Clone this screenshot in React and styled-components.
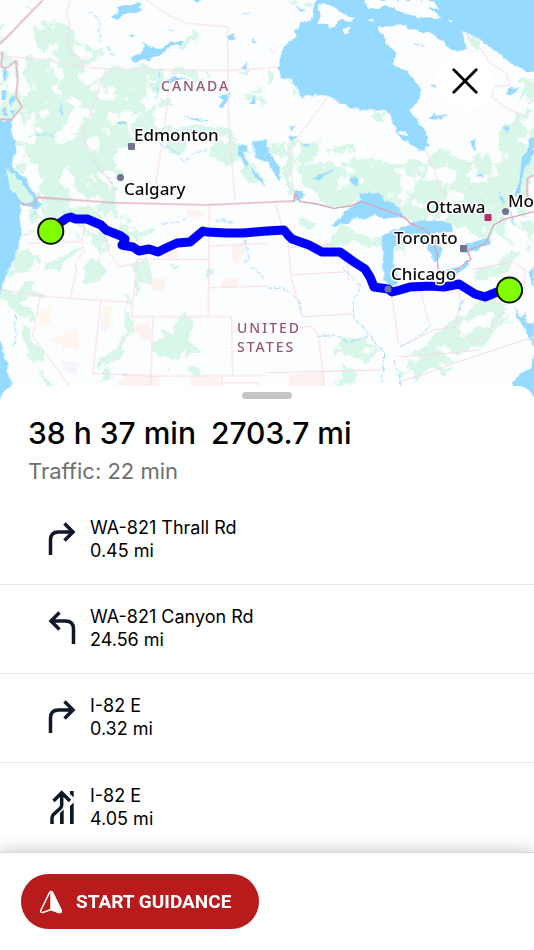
import React, { useState } from 'react';
import styled, { createGlobalStyle } from 'styled-components';

const GlobalStyle = createGlobalStyle`
  * {
    box-sizing: border-box;
  }

  body {
    margin: 0;
    background-color: #fff;
    font-family: Inter, "Liberation Sans", sans-serif;
    color: #000;
  }
`;

const Page = styled.main`
  display: flex;
  flex-direction: column;
  min-height: 100vh;
`;

const MapArea = styled.section`
  position: relative;
  background-color: #fcfdff;
`;

const MapSvg = styled.svg`
  display: block;
  width: 100%;
  height: auto;
`;

const CityName = styled.text`
  font-family: "Noto Sans", "Open Sans", sans-serif;
  font-size: 17px;
  font-weight: 500;
  fill: #0b0b0d;
  stroke: #fff;
  stroke-width: 3px;
  stroke-linejoin: round;
  paint-order: stroke;
`;

const CountryName = styled(CityName)`
  font-size: 14px;
  letter-spacing: 2px;
  fill: #965672;
  stroke-width: 1px;
`;

const CloseButton = styled.button`
  position: absolute;
  top: 52px;
  right: 40px;
  display: flex;
  align-items: center;
  justify-content: center;
  width: 58px;
  height: 58px;
  padding: 0;
  border: none;
  border-radius: 50%;
  background-color: #fff;
  cursor: pointer;
`;

const Sheet = styled.section`
  position: relative;
  flex: 1;
  margin-top: -14px;
  padding-top: 6px;
  border-radius: 16px 16px 0 0;
  background-color: #fff;
`;

const Handle = styled.div`
  width: 50px;
  height: 7px;
  margin: 0 auto;
  border-radius: 4px;
  background-color: #c5c5c7;
`;

const Summary = styled.header`
  padding: 14px 28px 9px;
`;

const Total = styled.h1`
  display: flex;
  gap: 15px;
  margin: 0;
  font-size: 30px;
  font-weight: 500;
  line-height: 40px;
`;

const Traffic = styled.p`
  margin: 2px 0 0;
  font-size: 22px;
  line-height: 32px;
  color: #6f6f6f;
`;

const Steps = styled.ol`
  margin: 0;
  padding: 0;
  list-style: none;
`;

const Step = styled.li`
  display: flex;
  align-items: center;
  gap: 14px;
  height: 89px;
  padding: 0 48px 2px;
  border-bottom: 1px solid #e9e9ea;

  &:last-child {
    border-bottom: none;
  }
`;

const StepIcon = styled.svg`
  flex: none;
  width: 28px;
  height: 36px;
`;

const StepText = styled.div`
  font-size: 18px;
  line-height: 23px;
`;

const Footer = styled.footer`
  position: sticky;
  bottom: 0;
  padding: 21px;
  border-top: 1px solid #d8d8d8;
  background-color: #fff;
  box-shadow: 0 0 16px rgba(0, 0, 0, 0.25);
`;

const StartButton = styled.button`
  display: flex;
  align-items: center;
  gap: 13px;
  height: 55px;
  padding: 0 28px 0 18px;
  border: none;
  border-radius: 28px;
  background-color: #b71b1c;
  color: #fff;
  font-family: Roboto, "Liberation Sans", sans-serif;
  font-size: 19px;
  font-weight: 700;
  cursor: pointer;
`;

const WATER = '#96daff';
const LAND = '#fcfdff';

const steps = [
  { turn: 'right', road: 'WA-821 Thrall Rd', distance: '0.45 mi' },
  { turn: 'left', road: 'WA-821 Canyon Rd', distance: '24.56 mi' },
  { turn: 'right', road: 'I-82 E', distance: '0.32 mi' },
  { turn: 'keepLeft', road: 'I-82 E', distance: '4.05 mi' },
];

const cities = [
  { name: 'Edmonton', x: 134, y: 141 },
  { name: 'Calgary', x: 124, y: 195 },
  { name: 'Ottawa', x: 426, y: 213 },
  { name: 'Mo', x: 508, y: 207 },
  { name: 'Toronto', x: 394, y: 244 },
  { name: 'Chicago', x: 391, y: 280 },
];

// The terrain is drawn in four tiles, each in thirds of a map unit
const NW = 'translate(0 0)';
const NE = 'translate(801 0)';
const SW = 'translate(0 570)';
const SE = 'translate(801 570)';

const Forests = () => (
  <g fill="#d9f7e9" filter="url(#patchy)">
    <g transform={NW}>
      <path d="M90 80L130 62 195 72 200 120 215 135 330 140 300 165 258 190 250 265 300 250 375 200 450 205 485 240 475 290 425 300 428 352 355 350 395 375 385 435 350 452 346 600 112 600 80 535 52 500 60 440 45 400 80 372 58 330 72 280 62 230 95 170 110 130Z" />
      <path d="M0 80L30 78 40 105 0 140ZM400 195L480 195 490 245 430 225ZM510 205L620 222 630 240 530 235Z" />
      <path d="M0 155L55 180 50 290 66 320 35 358 0 358Z" opacity=".8" />
      <path d="M540 120L580 105 590 125 545 142ZM420 350L480 300 540 310 525 345 455 350 470 385 520 375 610 385 655 380 660 400 600 425 540 440 480 435 440 415 400 425Z" />
      <path d="M640 450L700 420 750 460 790 500 801 540 760 550 700 500 640 480ZM700 215L760 210 735 230ZM730 270L801 265 801 310 740 300ZM640 395L700 390 720 420 655 425Z" />
      <path d="M70 20L120 5 100 25Z" />
    </g>
    <g transform={NE}>
      <path d="M30 0L135 5 130 35 90 40 50 20ZM0 205L20 205 15 250 0 250ZM70 240L100 285 70 290ZM255 322L355 330 365 360 270 345ZM583 92L650 128 640 145 600 120Z" />
      <path d="M70 420L140 415 150 450 200 450 260 425 265 480 330 495 470 475 540 450 610 470 680 460 700 420 720 360 760 370 801 400 801 600 85 600 60 560 40 480Z" />
      <path d="M760 240L801 215 801 300 770 300ZM770 320L801 330 801 390 730 370Z" />
      <path d="M0 435L45 440 45 465 0 455Z" />
    </g>
    <g transform={SW}>
      <path d="M110 0L340 0 350 50 385 110 365 140 330 80 290 50 310 120 345 170 300 200 280 160 245 140 250 100 180 85 120 60Z" />
      <path d="M70 45L105 60 90 85 68 90ZM115 110L100 145 85 130Z" />
      <path d="M35 200L70 180 110 200 100 270 120 310 60 330 95 370 110 450 140 500 135 560 190 590 140 590 100 530 75 470 55 390 30 340 0 330 5 270 40 250Z" />
      <path d="M130 210L190 190 240 165 245 180 190 215 180 245 140 235ZM255 235L290 200 320 240 300 270 270 275 250 260Z" />
      <path d="M375 70L450 130 440 140 370 120ZM400 225L440 215 450 260 420 270 415 330 400 290 405 250ZM500 210L535 230 525 245ZM620 230L650 240 640 275 625 265Z" />
      <path d="M380 310L370 360 375 400 380 430 350 480 290 520 300 540 350 520 385 460 400 430 450 440 440 410 460 385 400 385 385 360Z" />
      <path d="M455 480L500 450 490 420 530 390 550 360 560 390 590 400 575 440 595 480 550 510 545 550 500 540 480 510 460 510ZM575 550L605 540 600 575 580 575Z" />
      <path d="M200 470L212 440 205 480ZM320 540L345 560 280 580Z" />
    </g>
    <g transform={SE}>
      <path d="M85 0L801 0 801 60 700 70 650 150 620 140 560 110 480 95 430 95 380 70 285 35 200 50 110 38Z" />
      <path d="M80 80L110 60 150 90 130 120 100 115ZM170 140L210 115 290 130 330 150 340 170 240 160 190 165ZM380 170L400 150 430 170 425 220 390 215Z" />
      <path d="M680 100L720 75 760 110 735 170 690 130ZM620 240L690 210 760 180 740 230 700 250 690 290 640 270ZM750 80L801 70 801 190 775 150Z" />
      <path d="M600 340L660 310 720 340 740 380 690 410 660 460 600 470 560 520 470 560 400 590 385 560 440 540 420 500 480 470 500 430 560 410 590 380Z" />
      <path d="M190 500L240 450 300 460 325 490 300 540 260 570 200 585 220 550Z" />
    </g>
  </g>
);

const Deserts = () => (
  <g filter="url(#rough)">
    <g transform={SW} fill="#fcf3f0">
      <path d="M560 58L615 60 612 82 560 80ZM692 165L740 150 735 200 700 225ZM665 268L718 260 712 292 665 292ZM455 268L495 265 492 300 455 300ZM480 180L535 170 535 205 480 205ZM390 410L450 400 455 460 420 440ZM355 580L390 550 480 555 480 620 350 620ZM575 560L660 560 665 620 575 620Z" />
      <path d="M110 370L150 350 150 400 120 410ZM150 450L230 410 235 480 190 470ZM305 350L335 350 330 410 305 430Z" fill="#fcf6ec" />
      <path d="M185 510L235 520 230 560 195 545ZM300 400L325 400 320 430 305 425Z" fill="#f6f4fa" />
    </g>
    <g transform={SE} fill="#fcf3f0">
      <path d="M65 555L170 545 172 620 65 620Z" />
    </g>
  </g>
);

const Waters = () => (
  <g fill={WATER} filter="url(#rough)">
    <g transform={NW}>
      <path d="M-20 358L38 362 32 385 42 420 48 450 38 480 36 500 60 522 82 538 90 560 112 590 122 620 105 625 62 612 60 660 64 700 50 760 25 815 5 850 2 885 -20 885ZM-20 1020L0 1025 12 1045 12 1075 25 1090 20 1115 32 1140 38 1220 -20 1220Z" />
      <path d="M332 45L355 38 350 20 375 15 425 8 415 25 430 30 405 40 385 38 350 58ZM385 105L403 104 400 112ZM388 175L425 160 435 140 422 125 455 140 480 148 510 125 550 122 545 132 515 135 480 165 445 180 400 185Z" />
      <path d="M500 240L520 228 572 238 535 240 508 250ZM655 320L668 302 658 290 690 280 685 300 672 325ZM682 110L705 98 700 122 688 120ZM725 212L738 180 740 208ZM750 115L772 122 765 128Z" />
      <path d="M712 438L740 435 745 452 730 460 742 490 738 510 725 475 712 462ZM757 425L801 418 801 490 765 470ZM742 310L768 288 765 310ZM750 500L790 535 795 560 765 530ZM505 92L525 90 515 96ZM580 0L600 0 592 12ZM720 38L750 38 740 44ZM350 363L380 365 378 372 352 370ZM552 348L590 358 640 362 590 364Z" />
      <path d="M180 300L190 345 183 340ZM10 210L22 215 18 245 8 235ZM5 270L20 270 15 300 4 300ZM30 290L40 285 45 305 30 320ZM12 320L22 325 18 350 8 345ZM30 330L45 325 38 350Z" />
    </g>
    <g transform={NE}>
      <path d="M150 -20L140 20 135 60 100 70 95 85 80 95 90 105 75 120 60 130 45 155 38 180 35 210 45 235 75 240 90 265 105 292 150 283 185 288 215 305 240 318 260 325 290 332 320 328 355 330 370 345 375 365 385 380 388 402 415 420 440 438 465 455 472 440 490 440 478 425 485 410 470 390 455 365 440 345 425 332 445 315 460 290 460 265 440 235 415 212 380 195 382 170 385 155 370 140 355 130 350 108 332 90 335 80 380 78 400 70 430 85 460 95 490 98 510 115 530 125 545 150 560 155 590 150 600 140 590 110 583 90 610 105 640 118 650 130 690 155 720 180 750 200 785 215 820 212V-20Z" />
      <path d="M80 18L118 28 100 32ZM0 142L28 156 15 152ZM65 382L90 375 70 395ZM62 408L90 410 75 422ZM100 432L132 434 118 440ZM0 440L15 470 38 500 38 545 22 520 0 485ZM250 532L275 535 275 560 250 550ZM135 535L205 505 155 542ZM275 580L335 580 345 600 285 600Z" />
      <path d="M482 358L505 335 510 350 548 345 520 358ZM610 425L628 415 620 455ZM702 382L725 378 722 400ZM720 265L755 262 735 285 718 285ZM801 405L780 420 785 450 765 470 757 540 745 590 760 580 770 510 801 460ZM494 255L510 260 498 263ZM620 530L640 520 650 528ZM80 575L105 570 115 590 85 598Z" />
    </g>
    <g transform={SE}>
      <path d="M85 0L105 5 108 30 85 25ZM190 110L230 70 255 50 300 15 340 10 355 32 390 45 410 80 370 85 320 75 290 90 265 82 240 100Z" />
      <path d="M350 180L345 140 375 120 430 105 440 95 500 93 550 100 560 125 500 130 505 150 525 180 520 200 500 215 490 185 470 150 430 140 400 150 380 175 378 220 395 260 385 285 365 290 352 270 345 230Z" />
      <path d="M583 185L600 160 640 150 665 140 672 160 640 175 595 190ZM520 272L540 240 575 235 600 212 612 210 605 225 580 245 550 265Z" />
      <path d="M801 225L785 250 795 285 801 290ZM740 345L752 370 765 385 775 365 780 400 801 400V470L790 450 768 410 750 380ZM820 480L795 505 790 535 760 550 735 580 740 620H820ZM720 45L735 80 740 110 730 80ZM695 0L700 30 715 45Z" />
    </g>
  </g>
);

const Islands = () => (
  <g fill={LAND} filter="url(#rough)">
    <path d="M18 505L50 525 65 550 85 575 102 600 80 612 50 592 30 560Z" fill="#d9f7e9" />
    <g transform={NE}>
      <path d="M150 12L190 15 235 45 265 52 255 62 215 60 205 80 190 82 175 72 152 70 160 40ZM225 88L252 82 245 103 228 102ZM290 0H490L520 30 485 20 500 32 527 55 460 52 410 40 385 28 360 15 330 27 300 22ZM540 58L556 60 552 65ZM302 56L320 57 318 62ZM390 400L400 392 425 402 420 408Z" />
    </g>
  </g>
);

const Rivers = () => (
  <g fill="none" stroke={WATER} strokeWidth="3" strokeDasharray="16 5" filter="url(#rough)">
    <path d="M262 35L285 45 300 70 298 125M320 140L345 170M475 430L530 455 550 485 590 455 620 450M275 480L330 540 345 570M478 215L470 300M85 410L140 400 170 410" />
    <g transform={SW}>
      <path d="M485 103L540 97 560 82M645 95L670 90 705 100M735 150L745 200 735 220M750 232L775 245 795 275M105 20L112 50 100 75M55 130L90 135M228 130L245 150M45 370L48 440 38 475M365 555L385 552" />
    </g>
    <g transform={SE}>
      <path d="M0 290L60 300 95 330 105 370M150 440L210 435 240 455 300 440M225 230L255 265 280 290 258 340 260 380 310 440 350 490 345 580M400 470L430 455 470 430 490 405M590 330L570 370M380 510L405 590" />
    </g>
    <path d="M1240 130L1280 140" />
  </g>
);

const Borders = () => (
  <g fill="none" strokeLinejoin="round">
    <g stroke="#f7dbe4" strokeWidth="3">
      <path d="M210 0L200 40 210 80 198 120 212 160 245 175 248 200M0 168L130 178 250 200 317 207 683 212 801 204 836 201M440 0L510 48 560 70 683 80V212L686 370 705 600M317 207L248 410 260 435 300 490 340 570 345 600M515 212L490 400 460 600" />
      <path d="M983 292L865 450 885 600M1275 445L1345 620M1384 92L1430 130 1470 190 1520 220 1530 255 1480 260 1475 290 1520 325 1580 350" />
      <g transform={SW}>
        <path d="M80 155L90 160 160 155 245 155M265 40L245 155 252 180 225 225 230 240 210 325M0 300L120 317 210 325 398 337 412 210M290 60L310 130 330 190 355 230 405 222 412 208 625 208M628 42L625 380M625 168L801 160M625 293L801 288M398 337L395 380 695 380 698 555M695 425H801M120 317L98 440 210 588M303 332L278 550 450 558 801 557M460 380L450 620M665 560V620M665 578H775V620" />
      </g>
      <g transform={SE}>
        <path d="M25 35L45 110 65 175 72 260 105 380M65 172L200 165M72 255L245 245M105 380L255 372M95 412L135 410 155 440 172 590M0 548L345 540M175 150L180 180 240 220 245 270M372 300L395 465M460 300L485 400M570 290L580 330 565 410 500 420 400 470M400 575L801 440M560 410L620 460 660 430 720 350M610 240L740 215 775 240 770 320M640 330L720 345M400 500L540 490 640 480" />
      </g>
    </g>
    <g stroke="#dfa3b8" strokeWidth="4">
      <path d="M128 0L0 132M0 157L8 160 3 200 18 205 48 182 53 240 48 290 66 320 35 358 0 358M65 610L100 620 112 592 340 608 620 615 885 603" />
      <path d="M1602 525L1582 535V600" />
      <g transform={SE}>
        <path d="M80 35L85 10 100 35 150 42 200 55 250 48 285 35 340 55 410 80 430 100 480 122 510 185 513 240M513 270L575 235 612 208 600 180 655 162 680 105 710 88 801 65" />
      </g>
    </g>
  </g>
);

const ROUTE =
  'M51 231L61 222 67 218 71 217 75 219 87 219 94 222 101 225 106 230 116 234 121 236 125 239 124 242 122 245 127 246 133 247 139 251 149 249 158 252 166 248 177 243 190 242 203 231 207 232 227 233 243 233 267 231 284 230 288 235 292 239 309 245 322 252 340 252 347 257 354 262 365 269 370 277 374 287 388 289 392 292 400 290 410 287 430 286 444 287 459 284 467 289 475 294 485 297 497 292 509 290';

const RouteMap = () => (
  <MapSvg viewBox="0 0 534 400" role="img" aria-label="Route map">
    <defs>
      <filter id="rough" x="0" y="0" width="1602" height="1200" filterUnits="userSpaceOnUse">
        <feTurbulence type="fractalNoise" baseFrequency="0.05" numOctaves="3" seed="4" />
        <feDisplacementMap in="SourceGraphic" scale="14" xChannelSelector="R" yChannelSelector="G" />
      </filter>
      <filter id="patchy" x="0" y="0" width="1602" height="1200" filterUnits="userSpaceOnUse">
        <feTurbulence type="fractalNoise" baseFrequency="0.016" numOctaves="4" seed="9" result="noise" />
        <feColorMatrix in="noise" values="0 0 0 0 0  0 0 0 0 0  0 0 0 0 0  0 0 16 0 -9.200" result="holes" />
        <feDisplacementMap in="SourceGraphic" in2="noise" scale="70" xChannelSelector="R" yChannelSelector="G" result="edges" />
        <feComposite in="edges" in2="holes" operator="out" />
      </filter>
    </defs>
    <g transform="scale(0.33333)">
      <Forests />
      <Deserts />
      <Waters />
      <Islands />
      <Rivers />
      <Borders />
    </g>
    <CountryName x="161" y="91">CANADA</CountryName>
    <CountryName x="237" y="333">UNITED</CountryName>
    <CountryName x="237" y="352">STATES</CountryName>
    <path d={ROUTE} fill="none" stroke="#0000fe" strokeWidth="9" strokeLinecap="round" strokeLinejoin="round" />
    <g fill="#70748d">
      <rect x="128" y="143" width="7" height="7" rx="1" />
      <circle cx="120.500" cy="177.500" r="3.500" />
      <circle cx="505.500" cy="211.500" r="3.500" />
      <rect x="460" y="245" width="7" height="7" rx="1" />
      <circle cx="388" cy="289" r="3.500" />
      <rect x="484.500" y="214" width="7" height="7" rx="1" fill="#c02a68" />
    </g>
    {cities.map((city) => (
      <CityName key={city.name} x={city.x} y={city.y}>
        {city.name}
      </CityName>
    ))}
    <g fill="#80ff00" stroke="#0a1400" strokeWidth="2">
      <circle cx="50.700" cy="231.200" r="12.600" />
      <circle cx="509.500" cy="290" r="12.600" />
    </g>
  </MapSvg>
);

const turns = {
  right: <path d="M2.500 34V19Q2.500 11 10.500 11H25M16.500 2.500L25 11 16.500 19.500" />,
  left: <path d="M25.500 34V19Q25.500 11 17.500 11H3M11.500 2.500L3 11 11.500 19.500" />,
  keepLeft: (
    <>
      <path d="M4 35V29Q4 27 5.500 25.500L12 19.500Q13.700 18 13.700 16V4M5.500 12L13.700 3.700 22 12" />
      <path
        d="M12 24L15.700 20.500V35H12ZM22 17L25.700 13.500V35H22ZM22 2H25.700V8.500L22 5Z"
        fill="#101828"
        stroke="none"
      />
    </>
  ),
};

const App = () => {
  const [isOpen, setIsOpen] = useState(true);
  const [isGuiding, setIsGuiding] = useState(false);

  return (
    <Page>
      <GlobalStyle />
      <MapArea>
        <RouteMap />
        <CloseButton type="button" aria-label="Close" onClick={() => setIsOpen(false)}>
          <svg width="26" height="26" viewBox="0 0 26 26" stroke="#000" strokeWidth="2.800" strokeLinecap="round">
            <path d="M1.800 1.800L24.200 24.200M24.200 1.800L1.800 24.200" />
          </svg>
        </CloseButton>
      </MapArea>
      {isOpen && (
        <Sheet>
          <Handle />
          <Summary>
            <Total>
              <span>38 h 37 min</span>
              <span>2703.7 mi</span>
            </Total>
            <Traffic>Traffic: 22 min</Traffic>
          </Summary>
          <Steps>
            {steps.map((step) => (
              <Step key={step.road + step.distance}>
                <StepIcon viewBox="0 0 28 36" fill="none" stroke="#101828" strokeWidth="3.500" aria-hidden="true">
                  {turns[step.turn]}
                </StepIcon>
                <StepText>
                  <div>{step.road}</div>
                  <div>{step.distance}</div>
                </StepText>
              </Step>
            ))}
          </Steps>
        </Sheet>
      )}
      <Footer>
        <StartButton type="button" aria-pressed={isGuiding} onClick={() => setIsGuiding(!isGuiding)}>
          <svg width="24" height="24" viewBox="0 0 24 24" fill="none" stroke="#fff" strokeWidth="1.500" strokeLinejoin="round" aria-hidden="true">
            <path d="M12 1.500Q11 1.500 10.300 3L2 20Q1 23 4 22.500L12 19.500 20 22.500Q23 23 22 20L13.700 3Q13 1.500 12 1.500Z" />
            <path d="M12 1.500Q13 1.500 13.700 3L22 20Q23 23 20 22.500L12 19.500Z" fill="#fff" />
          </svg>
          START GUIDANCE
        </StartButton>
      </Footer>
    </Page>
  );
};

export default App;
